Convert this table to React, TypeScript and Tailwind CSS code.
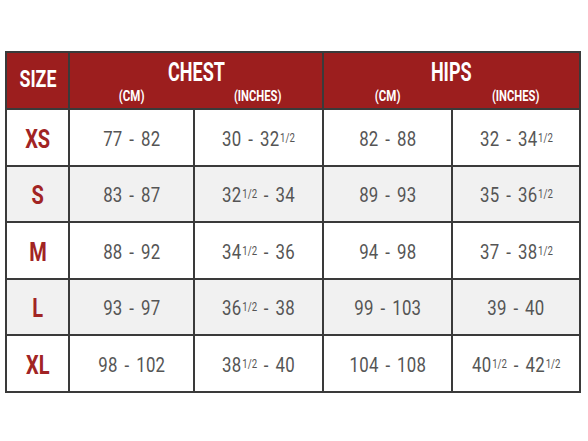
const ROWS = [
  { size: "XS", chestCm: "77 - 82", chestIn: ["30 - 32", "1/2", ""], hipsCm: "82 - 88", hipsIn: ["32 - 34", "1/2", ""] },
  { size: "S", chestCm: "83 - 87", chestIn: ["32", "1/2", " - 34"], hipsCm: "89 - 93", hipsIn: ["35 - 36", "1/2", ""] },
  { size: "M", chestCm: "88 - 92", chestIn: ["34", "1/2", " - 36"], hipsCm: "94 - 98", hipsIn: ["37 - 38", "1/2", ""] },
  { size: "L", chestCm: "93 - 97", chestIn: ["36", "1/2", " - 38"], hipsCm: "99 - 103", hipsIn: ["39 - 40", "", ""] },
  { size: "XL", chestCm: "98 - 102", chestIn: ["38", "1/2", " - 40"], hipsCm: "104 - 108", hipsIn: ["40", "1/2", " - 42", "1/2"] },
];

const font = { fontFamily: "Roboto, 'Liberation Sans', sans-serif" };

function Frac({ parts }: { parts: string[] }) {
  return (
    <span className="inline-block scale-x-[0.8] whitespace-pre tracking-[0.3px] [word-spacing:3px]">
      {parts.map((p, i) =>
        i % 2 === 1 ? (
          <span key={i} className="align-top text-[12px] leading-none relative top-[3px] ml-[1px] tracking-normal">{p}</span>
        ) : (
          <span key={i}>{p}</span>
        )
      )}
    </span>
  );
}

export default function App() {
  return (
    <div className="w-[588px] h-[441px] bg-white pt-[51px] pl-[5px]" style={font}>
      <table className="table-fixed border-collapse border-2 border-[#3a3a3a] w-[574px]">
        <colgroup>
          <col className="w-[63px]" />
          <col className="w-[125px]" />
          <col className="w-[129px]" />
          <col className="w-[129px]" />
          <col className="w-[128px]" />
        </colgroup>
        <thead className="bg-[#9c1e1e] text-white">
          <tr className="h-[33px]">
            <th rowSpan={2} className="border-r-2 border-b-2 border-[#3a3a3a] text-[24px] font-bold leading-none align-middle">
              <span className="inline-block scale-x-[0.74] pb-1">SIZE</span>
            </th>
            <th colSpan={2} className="border-r-2 border-[#3a3a3a] text-[25px] font-bold leading-none align-bottom">
              <span className="inline-block scale-x-[0.72]">CHEST</span>
            </th>
            <th colSpan={2} className="text-[25px] font-bold leading-none align-bottom">
              <span className="inline-block scale-x-[0.72]">HIPS</span>
            </th>
          </tr>
          <tr className="h-[24px] text-[14px] font-bold leading-none">
            <th className="border-b-2 border-[#3a3a3a] align-middle pb-[2px]"><span className="inline-block scale-x-[0.82]">(CM)</span></th>
            <th className="border-b-2 border-r-2 border-[#3a3a3a] align-middle pb-[2px]"><span className="inline-block scale-x-[0.8]">(INCHES)</span></th>
            <th className="border-b-2 border-[#3a3a3a] align-middle pb-[2px]"><span className="inline-block scale-x-[0.82]">(CM)</span></th>
            <th className="border-b-2 border-[#3a3a3a] align-middle pb-[2px]"><span className="inline-block scale-x-[0.8]">(INCHES)</span></th>
          </tr>
        </thead>
        <tbody className="text-[21px] leading-none text-[#555]">
          {ROWS.map((r, i) => (
            <tr key={r.size} className={`${i % 2 === 1 ? "bg-[#f1f1f1]" : "bg-white"} ${i % 2 === 1 ? "h-[56px]" : "h-[57px]"}`}>
              <td className="border-2 border-[#3a3a3a] text-center text-[25px] font-bold text-[#a12424] pt-[3px]">
                <span className="inline-block scale-x-[0.8]">{r.size}</span>
              </td>
              <td className="border-2 border-[#3a3a3a] text-center pt-[3px]">
                <Frac parts={[r.chestCm]} />
              </td>
              <td className="border-2 border-[#3a3a3a] text-center pt-[3px]">
                <Frac parts={r.chestIn} />
              </td>
              <td className="border-2 border-[#3a3a3a] text-center pt-[3px]">
                <Frac parts={[r.hipsCm]} />
              </td>
              <td className="border-2 border-[#3a3a3a] text-center pt-[3px]">
                <Frac parts={r.hipsIn} />
              </td>
            </tr>
          ))}
        </tbody>
      </table>
    </div>
  );
}
